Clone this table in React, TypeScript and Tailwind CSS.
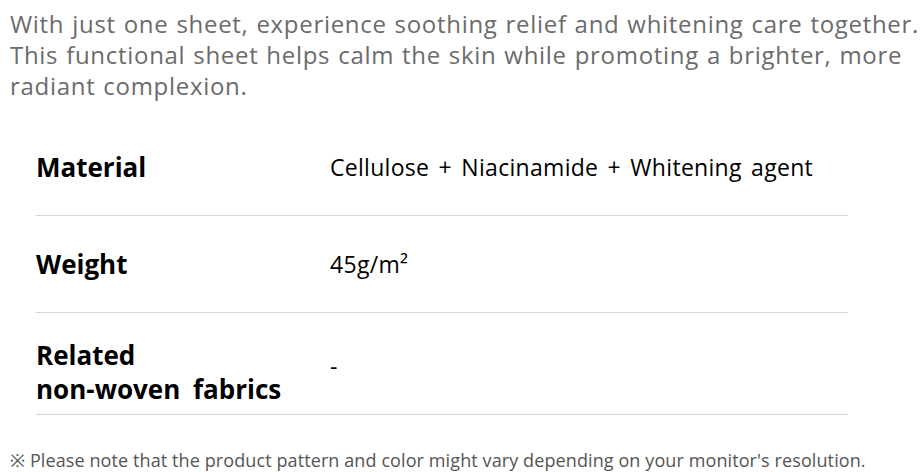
export default function App() {
  const rows = [
    { label: "Material", value: "Cellulose + Niacinamide + Whitening agent" },
    { label: "Weight", value: "45g/m²" },
  ];

  return (
    <div className="w-[922px] h-[472px] overflow-hidden bg-white font-['Open_Sans',sans-serif]">
      <p className="pl-[10px] pt-[8px] text-[24px] leading-[31px] tracking-[0.7px] [word-spacing:1px] text-[#6b6b6b]">
        With just one sheet, experience soothing relief and whitening care together.
        <br />
        This functional sheet helps calm the skin while promoting a brighter, more
        <br />
        radiant complexion.
      </p>

      <div className="ml-[36px] w-[812px] mt-[18px]">
        {rows.map((r) => (
          <div key={r.label} className="flex items-center h-[97px] border-b border-[#d6d6d6]">
            <div className="w-[294px] text-[26px] font-bold text-black">{r.label}</div>
            <div className="text-[23px] tracking-[0.3px] [word-spacing:3px] text-black">{r.value}</div>
          </div>
        ))}
        <div className="flex items-center h-[102px] border-b border-[#d6d6d6]">
          <div className="w-[294px] mt-[16px] text-[26px] leading-[34px] font-bold text-black [word-spacing:6px]">
            Related
            <br />
            non-woven fabrics
          </div>
          <div className="mt-[6px] text-[23px] text-black">-</div>
        </div>
      </div>

      <p className="pl-[10px] mt-[33px] text-[18px] leading-[24px] tracking-[0.1px] text-[#555]">
        ※ Please note that the product pattern and color might vary depending on your monitor's resolution.
      </p>
    </div>
  );
}
